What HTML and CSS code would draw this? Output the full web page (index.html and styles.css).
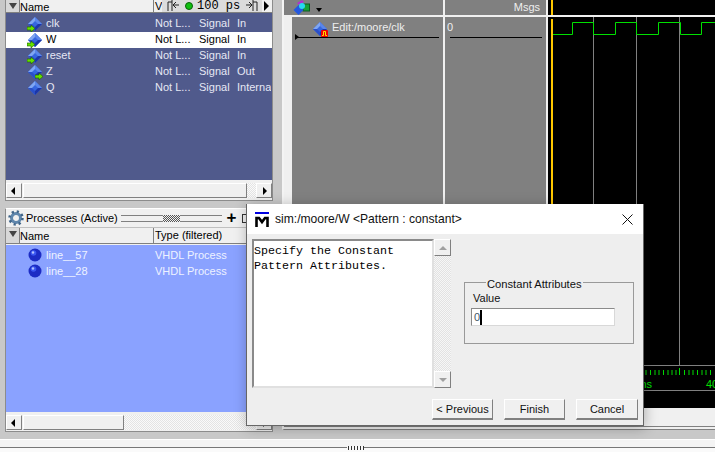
FILE: index.html
```html
<!DOCTYPE html>
<html lang="en">
<head>
    <meta charset="UTF-8">
    <meta name="viewport" content="width=device-width, initial-scale=1.0">
    <title>Create Pattern Wizard</title>
    <link rel="stylesheet" href="styles.css">
</head>
<body>
    <svg class="defs">
        <symbol id="diamond" viewBox="0 0 16 16">
            <polygon points="8,1 15,8 8,15 1,8" fill="#3566e0"/>
            <polygon points="8,1 1,8 5,8 8,5" fill="#7fa6f2"/>
            <polygon points="8,1 15,8 11,8 8,5" fill="#5a86ea"/>
            <polygon points="1,8 8,15 8,11 5,8" fill="#2a4fc8"/>
            <polygon points="15,8 8,15 8,11 11,8" fill="#1c36a8"/>
        </symbol>
        <symbol id="arrow" viewBox="0 0 9 7">
            <polygon points="0,2 4,2 4,0 8,3.5 4,7 4,5 0,5" fill="#66e000" stroke="#1c5a00" stroke-width="0.6"/>
        </symbol>
        <symbol id="ball" viewBox="0 0 14 14">
            <circle cx="7" cy="7" r="6.5" fill="#1c2cc4"/>
            <circle cx="5.5" cy="5" r="2.8" fill="#3c58f0"/>
            <circle cx="5" cy="4.5" r="1.2" fill="#b4c4ff"/>
        </symbol>
    </svg>

    <div class="workspace">
        <div class="left-col">
            <!-- objects pane -->
            <section class="panel objects">
                <div class="col-head col-head-top">
                    <span class="sort-arrow"></span>
                    <span class="cell-name">Name</span>
                    <span class="cell-v">V</span>
                    <div class="time-tools">
                        <svg class="tool-icon" viewBox="0 0 14 12"><path d="M1 11V2h4M5 0v11M6 5h6M6 5l3-3M6 5l3 3" fill="none" stroke="#222"/></svg>
                        <span class="green-dot"></span>
                        <span class="time-value">100 ps</span>
                        <svg class="tool-icon" viewBox="0 0 14 12"><path d="M13 11V2H9M9 0v11M2 5h6M8 5L5 2M8 5L5 8" fill="none" stroke="#222"/></svg>
                    </div>
                    <span class="play-arrow"></span>
                </div>
                <div class="list list-signals">
                    <div class="row">
                        <span class="icon-cell"><svg class="icon"><use href="#diamond"/></svg><svg class="arrow-in"><use href="#arrow"/></svg></span>
                        <span class="cell-name">clk</span><span class="cell-val">Not L...</span><span class="cell-kind">Signal</span><span>In</span>
                    </div>
                    <div class="row row-selected">
                        <span class="icon-cell"><svg class="icon"><use href="#diamond"/></svg><svg class="arrow-in"><use href="#arrow"/></svg></span>
                        <span class="cell-name">W</span><span class="cell-val">Not L...</span><span class="cell-kind">Signal</span><span>In</span>
                    </div>
                    <div class="row">
                        <span class="icon-cell"><svg class="icon"><use href="#diamond"/></svg><svg class="arrow-in"><use href="#arrow"/></svg></span>
                        <span class="cell-name">reset</span><span class="cell-val">Not L...</span><span class="cell-kind">Signal</span><span>In</span>
                    </div>
                    <div class="row">
                        <span class="icon-cell"><svg class="icon"><use href="#diamond"/></svg><svg class="arrow-out"><use href="#arrow"/></svg></span>
                        <span class="cell-name">Z</span><span class="cell-val">Not L...</span><span class="cell-kind">Signal</span><span>Out</span>
                    </div>
                    <div class="row">
                        <span class="icon-cell"><svg class="icon"><use href="#diamond"/></svg></span>
                        <span class="cell-name">Q</span><span class="cell-val">Not L...</span><span class="cell-kind">Signal</span><span class="cell-clip">Internal</span>
                    </div>
                </div>
                <div class="hscroll">
                    <span class="sb-btn sb-left"></span>
                    <span class="sb-thumb thumb-objects"></span>
                    <span class="sb-track"></span>
                    <span class="sb-btn sb-right"></span>
                </div>
            </section>

            <!-- processes pane -->
            <section class="panel processes">
                <div class="pane-title">
                    <svg class="gear" viewBox="0 0 16 16">
                        <circle cx="8" cy="8" r="4.500" fill="none" stroke="#5f86ac" stroke-width="3"/>
                        <circle cx="8" cy="8" r="6.500" fill="none" stroke="#3f6488" stroke-width="2.500" stroke-dasharray="2.200 2.900"/>
                    </svg>
                    <span class="pane-name">Processes (Active)</span>
                    <span class="grip-lines"></span>
                    <span class="grip-dots"></span>
                    <span class="grip-lines"></span>
                    <span class="plus-btn">+</span>
                    <span class="float-btn"></span>
                </div>
                <div class="col-head col-head-procs">
                    <span class="sort-arrow"></span>
                    <span class="cell-name">Name</span>
                    <span>Type (filtered)</span>
                </div>
                <div class="list list-procs">
                    <div class="row">
                        <span class="icon-cell"><svg class="icon-ball"><use href="#ball"/></svg></span>
                        <span class="cell-name">line__57</span><span>VHDL Process</span>
                    </div>
                    <div class="row">
                        <span class="icon-cell"><svg class="icon-ball"><use href="#ball"/></svg></span>
                        <span class="cell-name">line__28</span><span>VHDL Process</span>
                    </div>
                </div>
                <div class="hscroll">
                    <span class="sb-btn sb-left"></span>
                    <span class="sb-thumb thumb-procs"></span>
                    <span class="sb-track"></span>
                    <span class="sb-btn sb-right"></span>
                </div>
            </section>
        </div>

        <!-- wave window -->
        <section class="wave-pane">
            <div class="wave-body">
                <div class="wave-names">
                    <div class="wave-head head-icons">
                        <svg class="shapes" viewBox="0 0 17 15">
                            <polygon points="4,3 9,0 11,2 6,5" fill="#b030d0"/>
                            <rect x="10" y="4" width="6.500" height="7" fill="#18a038" stroke="#0c5a20"/>
                            <polygon points="5.500,5 10.500,10 5.500,15 .5,10" fill="#2458e0"/>
                            <circle cx="9" cy="6" r="3" fill="#28d8f0"/>
                        </svg>
                        <span class="caret-down"></span>
                    </div>
                    <div class="name-body">
                        <div class="wave-row">
                            <span class="wave-icon">
                                <svg class="icon"><use href="#diamond"/></svg>
                                <svg class="pulse-badge" viewBox="0 0 7 7"><rect width="7" height="7" rx="1" fill="#f00000"/><path d="M1 5.500h1.500v-4h2v4H6" fill="none" stroke="#ffe000"/></svg>
                            </span>
                            <span class="wave-label">Edit:/moore/clk</span>
                        </div>
                        <div class="row-rule"><span class="expand-tri"></span></div>
                    </div>
                </div>
                <div class="wave-values">
                    <div class="wave-head head-msgs">Msgs</div>
                    <div class="value-body">
                        <div class="wave-row">0</div>
                        <div class="row-rule"></div>
                    </div>
                </div>
                <svg class="wave-plot" viewBox="0 0 167 408">
                    <rect y="15" width="167" height="2" fill="#f0f0f0"/>
                    <path d="M45.500 17V365M88.500 17V365M131.500 17V365" stroke="#808080" fill="none"/>
                    <path d="M3.500 34.500H24.500V22.500H45.500V34.500H67.500V22.500H88.500V34.500H110.500V22.500H132.500V34.500H153.500V22.500H167" stroke="#00e000" fill="none"/>
                    <rect x="3" width="2" height="15" fill="#ffc800"/>
                    <rect x="3" y="19" width="2" height="346" fill="#ffc800"/>
                    <path d="M0 365.500H167M0 390.500H167" stroke="#808080" fill="none"/>
                    <path d="M98 370v5M102.500 370v5M107 370v5M111 370v5M115.500 370v5M120 370v5M124 370v5M128 370v5M131.500 368v7M136.500 370v5M141 370v5M145 370v5M149.500 370v5M154 370v5M158 370v5M162.500 370v5" stroke="#00d800" fill="none"/>
                    <text class="axis-text" x="104" y="388" text-anchor="end">200 ns</text>
                    <text class="axis-text" x="158" y="388">400 ns</text>
                </svg>
            </div>
            <div class="wave-foot"></div>
        </section>
    </div>

    <div class="band"></div>
    <div class="status-strip"><span class="strip-dots"></span></div>

    <!-- wizard dialog -->
    <div class="dialog">
        <div class="dialog-title">
            <svg class="logo" viewBox="0 0 14 15">
                <rect width="14" height="2" fill="#0000e0"/>
                <path d="M1.500 15V6h2.500l3 4 3-4h2.500v9" fill="none" stroke="#000" stroke-width="2.600"/>
            </svg>
            <span class="dialog-name">sim:/moore/W &lt;Pattern : constant&gt;</span>
            <svg class="close-x" viewBox="0 0 11 11"><path d="M.5 .5l10 10M10.500 .5l-10 10" stroke="#111" fill="none"/></svg>
        </div>
        <div class="dialog-main">
            <div class="info-box">Specify the Constant
Pattern Attributes.</div>
            <div class="vscroll">
                <span class="sb-btn-v"><span class="tri-up"></span></span>
                <span class="sb-track-v"></span>
                <span class="sb-btn-v"><span class="tri-down"></span></span>
            </div>
            <fieldset class="attr-group">
                <legend>Constant Attributes</legend>
                <label class="value-label" for="patternValue">Value</label>
                <div class="value-input" id="patternValue">0<span class="text-caret"></span></div>
            </fieldset>
        </div>
        <div class="dialog-buttons">
            <button class="btn btn-prev">&lt; Previous</button>
            <button class="btn btn-finish">Finish</button>
            <button class="btn btn-cancel">Cancel</button>
        </div>
    </div>
</body>
</html>
```

FILE: styles.css
```css
* {
    box-sizing: border-box;
}
html, body {
    margin: 0;
    height: 452px;
    overflow: hidden;
}
body {
    position: relative;
    width: 715px;
    background-color: #c8c8c8;
    font-family: "Liberation Sans", Arial, sans-serif;
    font-size: 11px;
    color: #000;
}
.defs {
    position: absolute;
    width: 0;
    height: 0;
}

.workspace {
    display: flex;
    height: 432px;
    padding-left: 5px;
}
.left-col {
    width: 268px;
    display: flex;
    flex-direction: column;
    gap: 7px;
    flex-shrink: 0;
}
.panel {
    display: flex;
    flex-direction: column;
    background-color: #f0f0f0;
    border: 1px solid #8c8c8c;
    border-top: 0;
}
.objects {
    height: 201px;
}
.processes {
    height: 224px;
    border-top: 1px solid #fff;
}

/* column headers */
.col-head {
    display: flex;
    align-items: center;
    height: 16px;
    flex-shrink: 0;
    background-color: #f0f0f0;
    border-bottom: 1px solid #808080;
    white-space: nowrap;
}
.col-head-top {
    height: 13px;
}
.col-head-procs {
    height: 17px;
    border-top: 1px solid #c0c0c0;
    line-height: 17px;
}
.sort-arrow {
    width: 14px;
    height: 100%;
    flex-shrink: 0;
    position: relative;
    background-color: #d8d8d8;
    border-right: 1px solid #808080;
}
.sort-arrow::after {
    content: "";
    position: absolute;
    left: 3px;
    top: 3px;
    border: 4px solid transparent;
    border-top: 6px solid #444;
    border-bottom: 0;
}
.col-head .cell-name {
    width: 134px;
    height: 100%;
    padding-left: 0;
    border-right: 1px solid #808080;
    line-height: 15px;
}
.col-head-procs .cell-name {
    line-height: 17px;
}
.col-head > span:nth-child(3) {
    padding-left: 1px;
}
.cell-v {
    width: 8px;
    flex-shrink: 0;
}
.time-tools {
    display: flex;
    align-items: center;
    width: 100px;
    height: 100%;
    background-color: #dcdcdc;
    padding-left: 5px;
}
.tool-icon {
    width: 14px;
    height: 12px;
    flex-shrink: 0;
}
.green-dot {
    width: 8px;
    height: 8px;
    margin-left: 4px;
    flex-shrink: 0;
    border-radius: 50%;
    background-color: #10c010;
    border: 1px solid #086008;
}
.time-value {
    width: 51px;
    flex-shrink: 0;
    padding-left: 4px;
    font-family: "Liberation Mono", monospace;
    font-size: 12px;
}
.play-arrow {
    margin-left: 2px;
    border: 5px solid transparent;
    border-left: 5px solid #000;
    border-right: 0;
}

/* lists */
.list {
    flex: 1;
    padding-top: 3px;
}
.list-signals {
    background-color: #505a8c;
    color: #e6e8f4;
}
.list-procs {
    background-color: #8aa2ff;
    color: #eef2ff;
    margin-top: 1px;
}
.row {
    display: flex;
    height: 16px;
    line-height: 15px;
    white-space: nowrap;
}
.row-selected {
    background-color: #fff;
    color: #000;
}
.icon-cell {
    position: relative;
    width: 40px;
    flex-shrink: 0;
}
.icon {
    position: absolute;
    left: 21px;
    top: 0;
    width: 16px;
    height: 16px;
}
.arrow-in, .arrow-out {
    position: absolute;
    top: 9px;
    width: 9px;
    height: 7px;
}
.arrow-in {
    left: 21px;
}
.arrow-out {
    left: 29px;
}
.icon-ball {
    position: absolute;
    left: 22px;
    top: 0;
    width: 14px;
    height: 14px;
}
.row .cell-name {
    width: 109px;
}
.cell-val {
    width: 44px;
}
.cell-kind {
    width: 38px;
}
.cell-clip {
    width: 34px;
    overflow: hidden;
}

/* scrollbars */
.hscroll {
    display: flex;
    height: 15px;
    margin: 3px 0 2px;
    flex-shrink: 0;
}
.processes .hscroll {
    margin-bottom: 1px;
}
.sb-btn, .sb-thumb {
    display: block;
    position: relative;
    background-color: #f0f0f0;
    border-right: 1px solid #808080;
    border-bottom: 1px solid #808080;
    border-top: 1px solid #fff;
    border-left: 1px solid #fff;
}
.sb-btn {
    width: 16px;
    flex-shrink: 0;
}
.sb-btn::after {
    content: "";
    position: absolute;
    top: 3px;
    border: 4px solid transparent;
}
.sb-left::after {
    left: 4px;
    border-right: 4px solid #000;
    border-left: 0;
}
.sb-right::after {
    left: 6px;
    border-left: 4px solid #000;
    border-right: 0;
}
.thumb-objects {
    width: 224px;
    margin-left: 1px;
}
.thumb-procs {
    width: 101px;
    margin-left: 1px;
}
.sb-track {
    flex: 1;
    background: repeating-conic-gradient(#e4e4e4 0 25%, #fafafa 0 50%) 0 0 / 2px 2px;
}

/* processes title */
.pane-title {
    display: flex;
    align-items: center;
    height: 18px;
    padding-left: 2px;
    flex-shrink: 0;
}
.gear {
    width: 16px;
    height: 16px;
    flex-shrink: 0;
}
.pane-name {
    margin-left: 2px;
    width: 95px;
    font-size: 11px;
    white-space: nowrap;
}
.grip-lines {
    width: 42px;
    height: 7px;
    border-top: 1px solid #808080;
    border-bottom: 1px solid #808080;
    flex-shrink: 0;
}
.grip-dots {
    width: 17px;
    height: 7px;
    flex-shrink: 0;
    background: repeating-conic-gradient(#555 0 25%, transparent 0 50%) 0 0 / 2px 2px;
}
.plus-btn {
    margin-left: 4px;
    width: 11px;
    font-size: 17px;
    font-weight: bold;
    line-height: 14px;
    text-align: center;
}
.float-btn {
    width: 6px;
    height: 9px;
    margin-left: 5px;
    border: 1px solid #333;
}

/* wave window */
.wave-pane {
    flex: 1;
    margin-left: 9px;
    display: flex;
    flex-direction: column;
    height: 430px;
    background-color: #f0f0f0;
    border-left: 2px solid #f4f4f4;
    border-bottom: 1px solid #808080;
}
.wave-body {
    display: flex;
    height: 408px;
    background-color: #f0f0f0;
}
.wave-names {
    width: 159px;
    flex-shrink: 0;
    display: flex;
    flex-direction: column;
}
.wave-values {
    width: 101px;
    margin-left: 2px;
    flex-shrink: 0;
    display: flex;
    flex-direction: column;
}
.wave-plot {
    width: 167px;
    height: 408px;
    margin-left: 2px;
    flex-shrink: 0;
    background-color: #000;
}
.wave-head {
    height: 15px;
    margin-bottom: 2px;
    background-color: #808080;
    flex-shrink: 0;
}
.head-icons {
    display: flex;
    align-items: flex-start;
    padding-left: 9px;
}
.shapes {
    width: 17px;
    height: 15px;
}
.caret-down {
    margin: 8px 0 0 6px;
    border: 3px solid transparent;
    border-top: 4px solid #000;
    border-bottom: 0;
}
.head-msgs {
    padding-right: 6px;
    text-align: right;
    line-height: 14px;
    color: #eee;
}
.name-body {
    flex: 1;
    margin-left: 8px;
    background-color: #808080;
    color: #eee;
}
.value-body {
    flex: 1;
    padding-left: 2px;
    background-color: #808080;
    color: #eee;
}
.wave-row {
    display: flex;
    height: 18px;
    padding-top: 3px;
    line-height: 14px;
    white-space: nowrap;
}
.wave-icon {
    position: relative;
    width: 40px;
    margin-left: 20px;
    flex-shrink: 0;
}
.wave-icon .icon {
    top: 1px;
    left: 0;
}
.pulse-badge {
    position: absolute;
    left: 9px;
    top: 10px;
    width: 7px;
    height: 7px;
}
.wave-label {
    margin-left: -20px;
}
.row-rule {
    position: relative;
    height: 1px;
    margin: 2px 4px 0 3px;
    background-color: #000;
}
.expand-tri {
    position: absolute;
    left: 0;
    top: -3px;
    border: 3.500px solid transparent;
    border-left: 4px solid #000;
    border-right: 0;
}
.wave-foot {
    height: 18px;
    margin-top: 1px;
    background-color: #f0f0f0;
    border-bottom: 1px solid #808080;
}
.axis-text {
    fill: #00e000;
    font-family: "Liberation Sans", Arial, sans-serif;
    font-size: 11px;
}

/* bottom of the main window */
.band {
    height: 8px;
    border-bottom: 1px solid #fff;
}
.status-strip {
    position: relative;
    height: 12px;
    background: linear-gradient(#f4f4f4 0 7px, #777 7px 8px, #fafafa 8px);
}
.strip-dots {
    position: absolute;
    left: 347px;
    top: 6px;
    width: 17px;
    height: 4px;
    background: radial-gradient(circle, #333 0 .7px, transparent .8px) 0 0 / 3px 2px;
    background-color: #fafafa;
}

/* dialog */
.dialog {
    position: absolute;
    left: 246px;
    top: 204px;
    width: 398px;
    height: 222px;
    display: flex;
    flex-direction: column;
    background-color: #eeeeee;
    border: 1px solid #666;
    border-top: 0;
    box-shadow: 1px 2px 12px rgba(0, 0, 0, .28);
}
.dialog-title {
    display: flex;
    align-items: center;
    height: 30px;
    padding: 0 10px 0 8px;
    background-color: #fff;
    flex-shrink: 0;
}
.logo {
    width: 14px;
    height: 15px;
    flex-shrink: 0;
}
.dialog-name {
    margin-left: 6px;
    flex: 1;
    font-size: 12.1px;
    color: #111;
    white-space: nowrap;
}
.close-x {
    width: 11px;
    height: 11px;
    flex-shrink: 0;
}
.dialog-main {
    display: flex;
    align-items: flex-start;
    padding: 5px 0 0 5px;
    height: 154px;
}
.info-box {
    width: 182px;
    height: 149px;
    padding: 3px 0 0;
    background-color: #fff;
    border: 2px solid #8a8a8a;
    border-right-color: #e0e0e0;
    border-bottom-color: #e0e0e0;
    font-family: "Liberation Mono", monospace;
    font-size: 11.67px;
    line-height: 15px;
    white-space: pre;
}
.vscroll {
    display: flex;
    flex-direction: column;
    width: 17px;
    height: 149px;
}
.sb-btn-v {
    display: flex;
    align-items: center;
    justify-content: center;
    height: 17px;
    flex-shrink: 0;
    background-color: #f0f0f0;
    border: 1px solid #fff;
    border-right-color: #808080;
    border-bottom-color: #808080;
}
.sb-track-v {
    flex: 1;
    background: repeating-conic-gradient(#e2e2e2 0 25%, #f6f6f6 0 50%) 0 0 / 2px 2px;
}
.tri-up, .tri-down {
    border: 4px solid transparent;
}
.tri-up {
    border-bottom: 4px solid #a0a0a0;
    border-top: 0;
}
.tri-down {
    border-top: 4px solid #a0a0a0;
    border-bottom: 0;
}
.attr-group {
    width: 170px;
    height: 69px;
    margin: 36px 0 0 13px;
    padding: 0 0 0 8px;
    border: 1px solid #999;
    min-width: 0;
    color: #111;
}
.attr-group legend {
    margin-left: 13px;
    padding: 3px 1px 0;
    font-size: 11.2px;
    line-height: 12px;
}
.value-label {
    display: block;
    line-height: 14px;
    margin-top: 1px;
}
.value-input {
    display: flex;
    align-items: center;
    width: 144px;
    height: 18px;
    margin: 3px 0 0 -2px;
    padding-left: 2px;
    background-color: #fff;
    border: 1px solid #d8d8d8;
    border-top-color: #8a8a8a;
    border-left-color: #8a8a8a;
    color: #456;
}
.text-caret {
    width: 2px;
    height: 15px;
    background-color: #000;
}
.dialog-buttons {
    display: flex;
    gap: 11px;
    padding: 11px 0 0 185px;
}
.btn {
    width: 61px;
    height: 21px;
    padding: 0;
    background-color: #f0f0f0;
    border: 1px solid #fff;
    border-right-color: #808080;
    border-bottom: 2px solid #808080;
    font-family: inherit;
    font-size: 11px;
    color: #111;
}
.btn-cancel {
    width: 62px;
}
```
